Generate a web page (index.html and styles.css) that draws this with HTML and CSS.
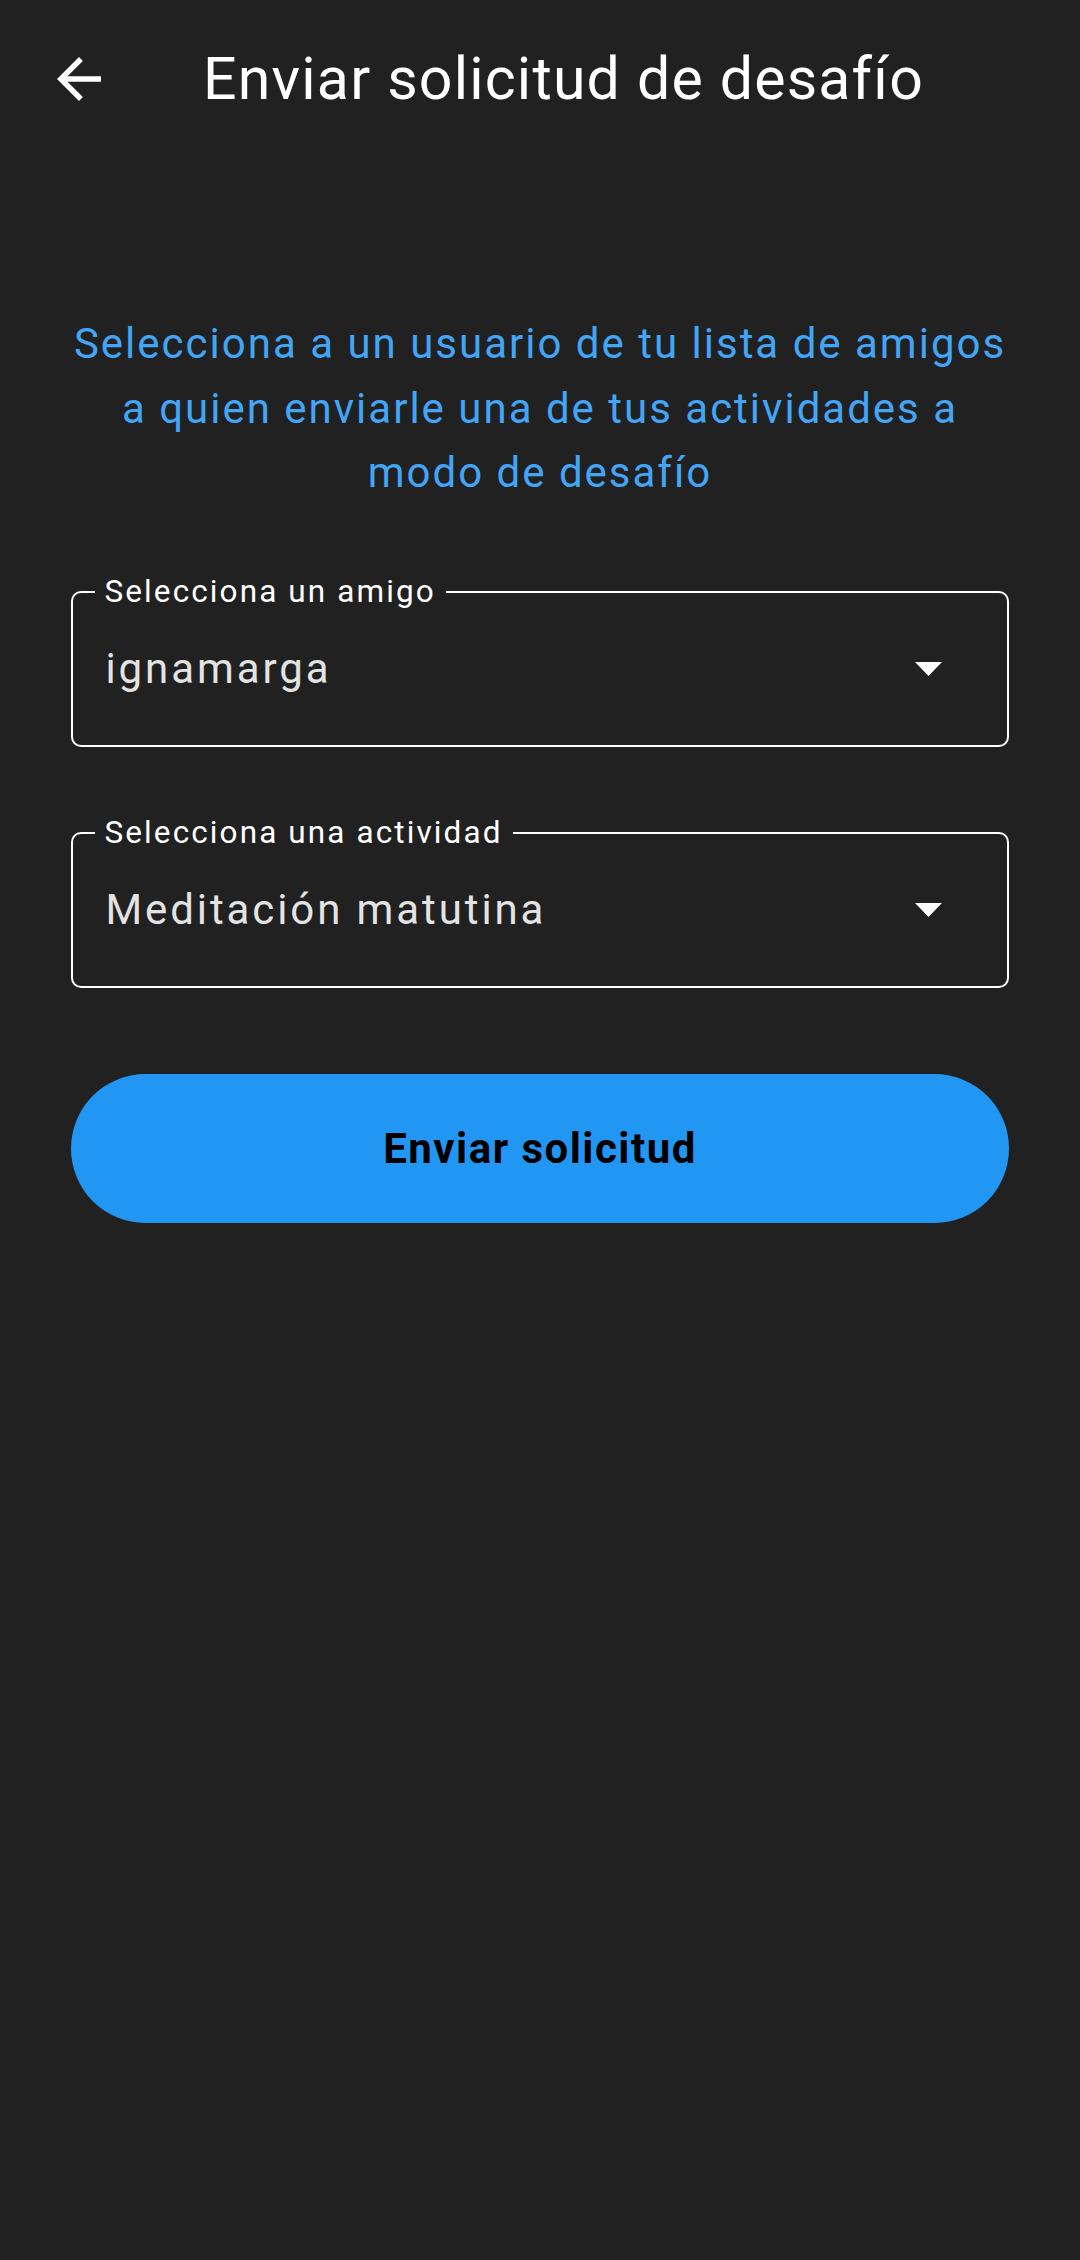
FILE: index.html
```html
<!DOCTYPE html>
<html lang="es">
<head>
<meta charset="utf-8">
<title>Enviar solicitud de desafío</title>
<link rel="stylesheet" href="styles.css">
</head>
<body>
<div class="screen">
  <header class="appbar">
    <button class="back" aria-label="Atrás">
      <svg width="66" height="66" viewBox="0 0 24 24"><path fill="#ffffff" d="M20 11H7.83l5.59-5.59L12 4l-8 8 8 8 1.41-1.41L7.83 13H20v-2z"/></svg>
    </button>
    <h1 class="title">Enviar solicitud de desafío</h1>
  </header>
  <main class="content">
    <p class="intro">Selecciona a un usuario de tu lista de amigos a quien enviarle una de tus actividades a modo de desafío</p>
    <fieldset class="field">
      <legend class="field-label">Selecciona un amigo</legend>
      <div class="field-row">
        <span class="field-value">ignamarga</span>
        <svg class="drop" width="27" height="14" viewBox="0 0 27 14"><polygon points="0,0 27,0 13.5,14" fill="#ffffff"/></svg>
      </div>
    </fieldset>
    <fieldset class="field">
      <legend class="field-label">Selecciona una actividad</legend>
      <div class="field-row">
        <span class="field-value">Meditación matutina</span>
        <svg class="drop" width="27" height="14" viewBox="0 0 27 14"><polygon points="0,0 27,0 13.5,14" fill="#ffffff"/></svg>
      </div>
    </fieldset>
    <button class="submit">Enviar solicitud</button>
  </main>
</div>
</body>
</html>
```
FILE: styles.css
```css
* { box-sizing: border-box; }
html, body {
  margin: 0;
  padding: 0;
  background: #212121;
}
body {
  font-family: Roboto, "Noto Sans", sans-serif;
  color: #ffffff;
}
.screen {
  width: 1080px;
  height: 2260px;
  background: #212121;
}
.appbar {
  height: 158px;
  display: flex;
  align-items: center;
  padding-left: 46px;
}
.back {
  width: 66px;
  height: 66px;
  padding: 0;
  border: none;
  background: transparent;
  display: flex;
}
.title {
  margin: 0 0 0 91px;
  font-size: 59px;
  font-weight: 400;
  line-height: 70px;
  color: #ffffff;
  letter-spacing: 1.2px;
}
.content {
  padding: 0 71px;
  display: flex;
  flex-direction: column;
}
.intro {
  margin: 154px 0 68px;
  text-align: center;
  color: #42a5f5;
  font-size: 42px;
  line-height: 64.5px;
  letter-spacing: 2px;
}
.field {
  margin: 0 0 68px;
  padding: 0;
  border: 2.5px solid #ffffff;
  border-radius: 10px;
  min-width: 0;
}
.field-label {
  margin-left: 21.5px;
  padding: 0 10px;
  font-size: 31.5px;
  line-height: 36px;
  letter-spacing: 2.1px;
  color: #ffffff;
}
.field-row {
  height: 118px;
  margin-bottom: 17px;
  display: flex;
  align-items: center;
  justify-content: space-between;
  padding: 0 65px 0 32.5px;
}
.field-value {
  font-size: 42px;
  line-height: 50px;
  letter-spacing: 2.9px;
  color: #e3e3e3;
}
.drop { display: block; }
.submit {
  margin-top: 18px;
  height: 149px;
  border: none;
  border-radius: 75px;
  background: #2196f3;
  color: #000000;
  font-family: Roboto, "Noto Sans", sans-serif;
  font-size: 42px;
  font-weight: 700;
  letter-spacing: 1.5px;
}
```
